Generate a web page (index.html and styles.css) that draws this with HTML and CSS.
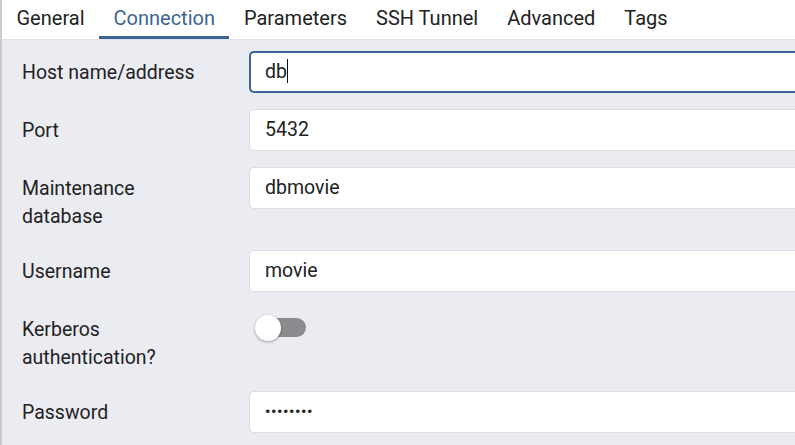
FILE: index.html
```html
<!DOCTYPE html>
<html>
<head>
<meta charset="utf-8">
<link rel="stylesheet" href="styles.css">
</head>
<body>
<div class="panel">
  <div class="tabs">
    <div class="tab">General</div>
    <div class="tab active">Connection</div>
    <div class="tab">Parameters</div>
    <div class="tab">SSH Tunnel</div>
    <div class="tab">Advanced</div>
    <div class="tab">Tags</div>
  </div>
  <div class="form">
    <div class="row">
      <div class="label">Host name/address</div>
      <div class="field"><div class="input focus">db<span class="caret"></span></div></div>
    </div>
    <div class="row">
      <div class="label">Port</div>
      <div class="field"><div class="input">5432</div></div>
    </div>
    <div class="row">
      <div class="label">Maintenance<br>database</div>
      <div class="field"><div class="input">dbmovie</div></div>
    </div>
    <div class="row">
      <div class="label">Username</div>
      <div class="field"><div class="input">movie</div></div>
    </div>
    <div class="row">
      <div class="label">Kerberos<br>authentication?</div>
      <div class="field"><div class="switch"><div class="track"></div><div class="knob"></div></div></div>
    </div>
    <div class="row">
      <div class="label">Password</div>
      <div class="field"><div class="input pw">••••••••</div></div>
    </div>
  </div>
</div>
</body>
</html>
```

FILE: styles.css
```css
html, body {
  margin: 0;
  padding: 0;
  background: #ebecf2;
  font-family: Roboto, "Liberation Sans", sans-serif;
  color: #222;
  overflow: hidden;
}
.panel {
  height: 445px;
  border-left: 2px solid #c9cbd0;
  box-sizing: border-box;
}
.tabs {
  display: flex;
  background: #fff;
  height: 39px;
  border-bottom: 1px solid #dfe1e6;
}
.tab {
  font-size: 20px;
  line-height: 36px;
  padding: 0 14.5px;
  border-bottom: 3px solid transparent;
  white-space: nowrap;
}
.tab.active {
  color: #3b6592;
  border-bottom-color: #3b6592;
}
.form {
  padding: 11px 0 0 20px;
  display: flex;
  flex-direction: column;
  gap: 16px;
}
.row {
  display: flex;
  align-items: flex-start;
}
.label {
  width: 227px;
  flex: none;
  font-size: 19.5px;
  line-height: 28px;
  padding: 8px 0 3px;
}
.field {
  flex: 1;
  margin-right: -20px;
}
.input {
  height: 42px;
  box-sizing: border-box;
  background: #fff;
  border: 1px solid #dcdde2;
  border-right: none;
  border-radius: 5px 0 0 5px;
  padding: 0 15px;
  font-size: 19.5px;
  line-height: 40px;
  color: #222;
}
.input.focus {
  border: 2px solid #3d6592;
  border-right: none;
  padding: 0 14px;
  line-height: 38px;
}
.caret {
  display: inline-block;
  width: 1px;
  height: 24px;
  background: #111;
  vertical-align: -5px;
}
.input.pw {
  font-size: 15px;
  letter-spacing: 0.6px;
  font-weight: 700;
}
.switch {
  position: relative;
  width: 60px;
  height: 42px;
}
.track {
  position: absolute;
  left: 8px;
  top: 10px;
  width: 49px;
  height: 19px;
  border-radius: 10px;
  background: #8c8c90;
}
.knob {
  position: absolute;
  left: 6px;
  top: 7px;
  width: 26px;
  height: 26px;
  border-radius: 50%;
  background: #fff;
  box-shadow: 0 1px 3px rgba(0,0,0,0.35);
}
```
